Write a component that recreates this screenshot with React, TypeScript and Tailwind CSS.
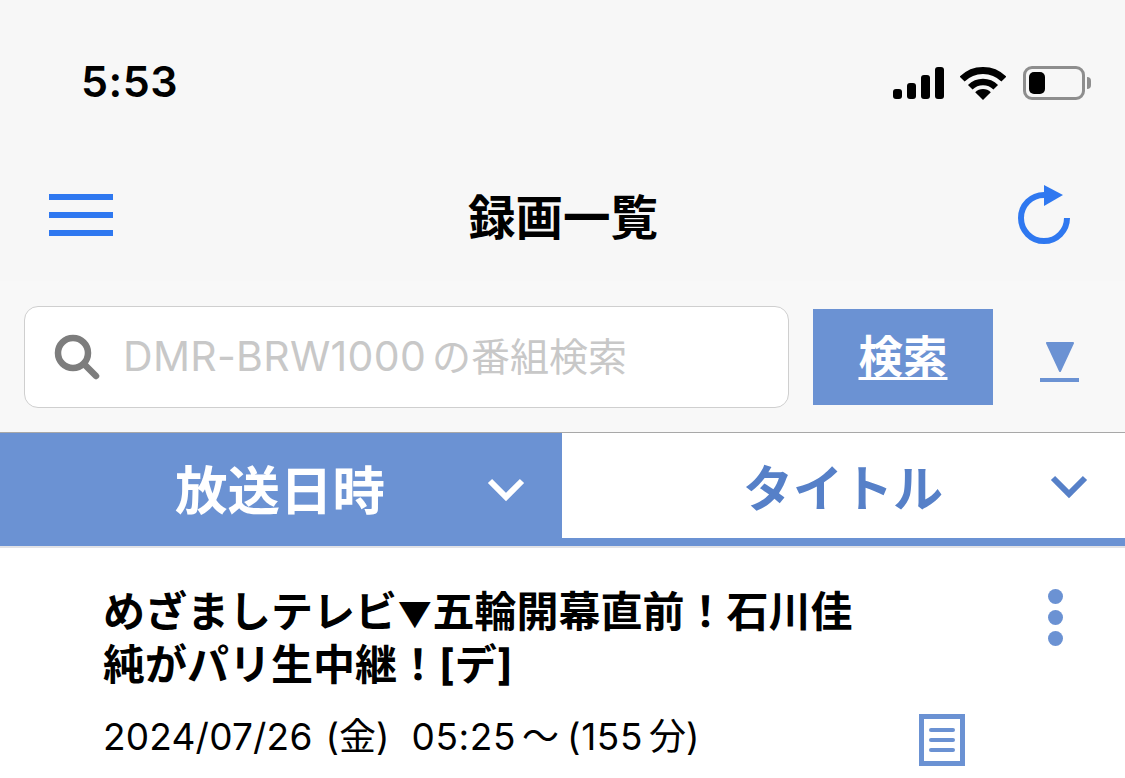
const FONT = "font-['Inter','Noto_Sans_CJK_JP',sans-serif]";

function StatusIcons() {
  return (
    <div className="flex items-center">
      <svg width="52" height="32" viewBox="0 0 52 32">
        <rect x="1" y="22" width="9" height="10" rx="3" fill="black" />
        <rect x="15" y="16" width="9" height="16" rx="3" fill="black" />
        <rect x="29" y="8" width="9" height="24" rx="3" fill="black" />
        <rect x="43" y="0" width="9" height="32" rx="3" fill="black" />
      </svg>
      <svg width="46" height="33" viewBox="0 0 46 33" className="ml-[16px]">
        <path d="M23 33 L15.2 25.2 A11 11 0 0 1 30.8 25.2 Z" fill="black" />
        <path d="M10.27 20.27 A18 18 0 0 1 35.73 20.27" fill="none" stroke="black" strokeWidth="6.5" />
        <path d="M2.14 12.14 A29.5 29.5 0 0 1 43.86 12.14" fill="none" stroke="black" strokeWidth="7" />
      </svg>
      <div className="ml-[17px] flex items-center">
        <div className="w-[62px] h-[34px] rounded-[9px] border-[3px] border-[#8e8e8e] p-[3px]">
          <div className="w-[16px] h-full rounded-[5px] bg-black" />
        </div>
        <div className="w-[4px] h-[12px] ml-[2px] rounded-r-full bg-[#8e8e8e]" />
      </div>
    </div>
  );
}

function Chevron({ color }: { color: string }) {
  return (
    <svg width="38" height="26" viewBox="0 0 38 26">
      <path d="M3 5 L19 21 L35 5" fill="none" stroke={color} strokeWidth="6" />
    </svg>
  );
}

export default function App() {
  return (
    <div className={`w-[1125px] h-[778px] overflow-hidden bg-white ${FONT}`}>
      {/* status bar + nav */}
      <div className="h-[281px] bg-[#f7f7f7]">
        <div className="h-[167px] flex items-start justify-between pt-[56px] pl-[81px] pr-[34px]">
          <span className="text-[43px] leading-[50px] font-semibold tracking-[0.5px] text-black">5:53</span>
          <div className="pt-[10px]">
            <StatusIcons />
          </div>
        </div>
        <div className="relative flex items-center justify-between pl-[49px] pr-[53px] h-[100px]">
          <div className="w-[64px] mb-[4px] flex flex-col gap-[12px]">
            <div className="h-[6px] bg-[#2f78f0]" />
            <div className="h-[6px] bg-[#2f78f0]" />
            <div className="h-[6px] bg-[#2f78f0]" />
          </div>
          <h1 className="mr-[5px] mt-[2px] text-[47.5px] leading-[60px] font-bold text-black">録画一覧</h1>
          <svg width="54" height="60" viewBox="0 0 54 60" className="mb-[6px]">
            <path d="M49 34 A23 23 0 1 1 26 11" fill="none" stroke="#2f78f0" strokeWidth="6" />
            <path d="M26 1 L45 11 L26 22 Z" fill="#2f78f0" />
          </svg>
        </div>
      </div>

      {/* search row */}
      <div className="h-[152px] bg-[#f8f8f8] flex items-start pt-[25px] pl-[24px] border-b border-[#a8a8a8]">
        <div className="w-[765px] h-[102px] rounded-[14px] border border-[#cfcfcf] bg-white flex items-center pl-[28px]">
          <svg width="48" height="48" viewBox="0 0 48 48">
            <circle cx="20" cy="20" r="15" fill="none" stroke="#7d7d7d" strokeWidth="6.5" />
            <path d="M31 31 L43 43" stroke="#7d7d7d" strokeWidth="6.5" strokeLinecap="round" />
          </svg>
          <span className="ml-[22px] text-[39px] text-[#c8c8c8]">
            <span className="text-[41px] tracking-[0.3px]">DMR-BRW1000</span>
            <span className="ml-[6px]">の番組検索</span>
          </span>
        </div>
        <div className="ml-[24px] mt-[3px] w-[180px] h-[96px] bg-[#6b92d3] flex items-center justify-center">
          <span className="text-[44.5px] font-semibold text-white underline decoration-[3px] underline-offset-[4px]">検索</span>
        </div>
        <div className="ml-[47px] mt-[35px] flex flex-col items-center w-[39px]">
          <svg width="32" height="32" viewBox="0 0 32 32">
            <path d="M3 2 H29 L16 30 Z" fill="#6b92d3" stroke="#6b92d3" strokeWidth="2" strokeLinejoin="round" />
          </svg>
          <div className="w-[39px] h-[4px] mt-[5px] bg-[#6b92d3]" />
        </div>
      </div>

      {/* sort tabs */}
      <div className="flex h-[113px]">
        <div className="w-[562px] bg-[#6b92d3] flex items-center pl-[175px] pb-[2px]">
          <span className="text-[52.5px] font-bold text-white w-[312px] pt-[6px]">放送日時</span>
          <Chevron color="#ffffff" />
        </div>
        <div className="w-[563px] bg-white border-b-[8px] border-[#6b92d3] flex items-center pl-[181px]">
          <span className="text-[50px] font-bold text-[#5680c8] w-[307px] pt-[8px]">タイトル</span>
          <Chevron color="#5680c8" />
        </div>
      </div>
      <div className="h-[2px] bg-[#e2e2e6]" />

      {/* recording row */}
      <div className="flex pl-[103px] pt-[37px]">
        <div className="w-[770px] shrink-0">
          <div className="text-[42px] leading-[53px] font-bold text-black whitespace-nowrap">
            めざましテレビ<span className="text-[34px] leading-[34px]">▼</span>五輪開幕直前！石川佳
            <br />
            純がパリ生中継！[デ]
          </div>
          <div className="mt-[21px] text-[37px] leading-[50px] text-black whitespace-nowrap">
            <span className="tracking-[0.2px]">2024/07/26</span>
            <span className="ml-[13px]">(金)</span>
            <span className="ml-[22px] tracking-[0.6px]">05:25</span>
            <span className="ml-[6px]">～</span>
            <span className="ml-[8px] tracking-[0.6px]">(155</span>
            <span className="ml-[6px]">分)</span>
          </div>
        </div>
        <div className="relative flex-1">
          <div className="absolute left-[175px] top-[4px] flex flex-col gap-[6px]">
            <div className="w-[15px] h-[15px] rounded-full bg-[#6b92d3]" />
            <div className="w-[15px] h-[15px] rounded-full bg-[#6b92d3]" />
            <div className="w-[15px] h-[15px] rounded-full bg-[#6b92d3]" />
          </div>
          <div className="absolute left-[46px] top-[129px] w-[46px] h-[52px] border-[5px] border-[#6b92d3] flex flex-col items-center justify-center gap-[6px]">
            <div className="w-[26px] h-[4px] rounded-full bg-[#6b92d3]" />
            <div className="w-[26px] h-[4px] rounded-full bg-[#6b92d3]" />
            <div className="w-[26px] h-[4px] rounded-full bg-[#6b92d3]" />
          </div>
        </div>
      </div>
    </div>
  );
}
